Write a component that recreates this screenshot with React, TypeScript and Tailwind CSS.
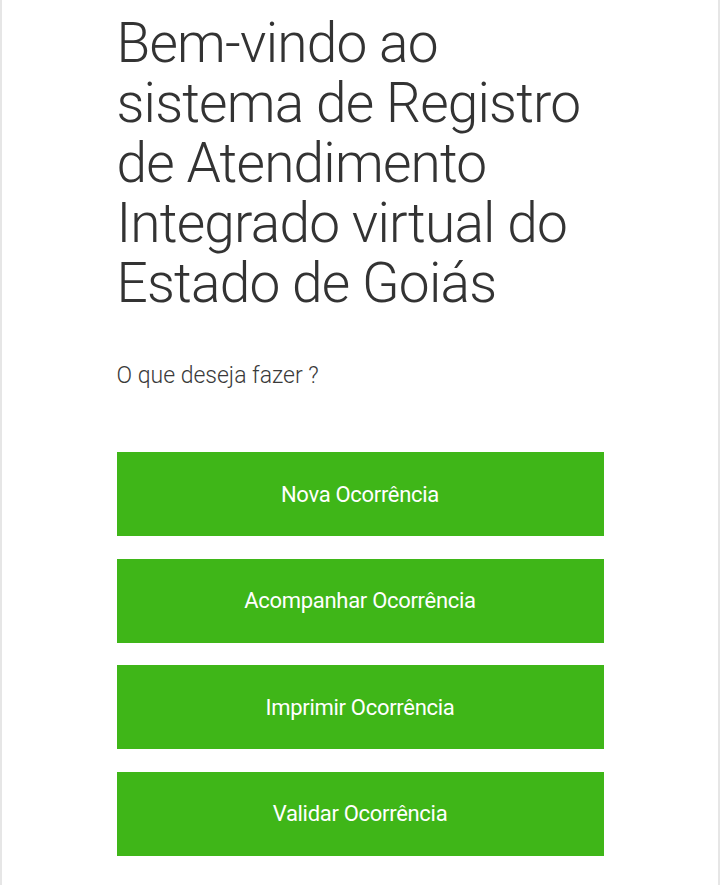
import React from 'react'

const actions = ['Nova Ocorrência', 'Acompanhar Ocorrência', 'Imprimir Ocorrência', 'Validar Ocorrência']

export default function App() {
  return (
    <div className="min-h-screen bg-white border-x-2 border-[#e6e6e6] font-['Roboto',sans-serif]">
      <div className="w-[487px] mx-auto pt-[13px] pb-8">
        <h1 className="text-[55px] leading-[60px] font-light text-[#333] tracking-[-0.8px] whitespace-nowrap">
          Bem-vindo ao
          <br />
          sistema de Registro
          <br />
          de Atendimento
          <br />
          Integrado virtual do
          <br />
          Estado de Goiás
        </h1>

        <p className="mt-[46px] text-[23px] leading-[33px] font-light text-[#3a3a3a]">O que deseja fazer ?</p>

        <div className="mt-[60px] flex flex-col gap-[22.5px]">
          {actions.map(a => (
            <button
              key={a}
              className="h-[84px] w-full bg-[#3fb618] text-white text-[22px] tracking-[-0.3px] flex items-center justify-center"
            >
              {a}
            </button>
          ))}
        </div>
      </div>
    </div>
  )
}
